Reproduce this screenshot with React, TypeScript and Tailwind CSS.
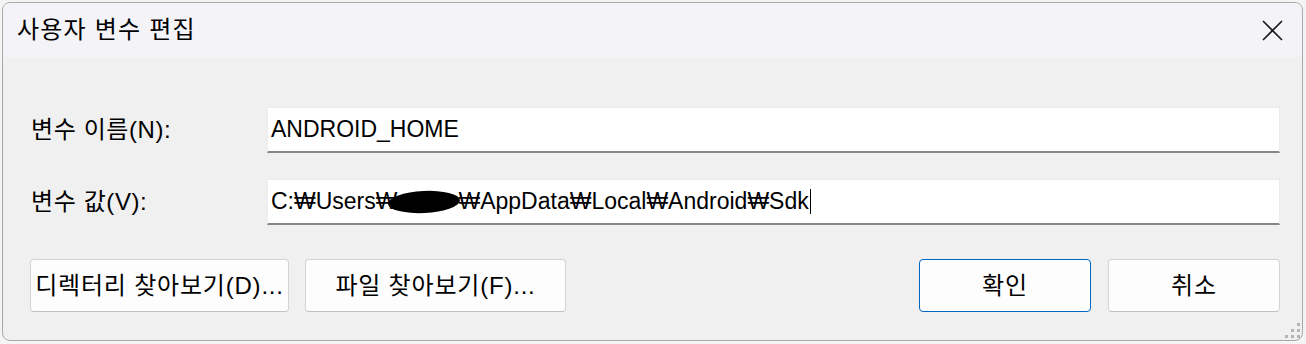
export default function App() {
  const font = { fontFamily: '"Liberation Sans", "Noto Sans CJK KR", sans-serif' };

  return (
    <div className="w-[1306px] h-[344px] bg-[#f4f4f4] pt-[2px] pl-[2px] overflow-hidden" style={font}>
      {/* WINDOW */}
      <div className="relative w-[1301px] h-[339px] border border-[#a9a9a9] rounded-[8px] overflow-hidden flex flex-col bg-[#f0f0f0] text-black">
        {/* TITLE BAR */}
        <div className="h-[54px] bg-[#f3f3f8] flex items-center justify-between pl-[14px] pr-[19px]">
          <span className="text-[24px] tracking-[1.2px]">사용자 변수 편집</span>
          <svg width="21" height="21" viewBox="0 0 21 21" className="text-[#1a1a1a]">
            <path d="M1 1 L20 20 M20 1 L1 20" stroke="currentColor" strokeWidth="1.6" fill="none" />
          </svg>
        </div>

        {/* BODY */}
        <div className="flex-1 pt-[50px]">
          <div className="grid grid-cols-[236px_1013px] gap-y-[26px] pl-[28px] items-center">
            <span className="text-[24px] tracking-[0.6px]">변수 이름(N):</span>
            <div className="h-[46px] bg-white border border-[#ececec] border-b-2 border-b-[#878787] flex items-center pl-[3px] text-[23px]">
              ANDROID_HOME
            </div>

            <span className="text-[24px] tracking-[0.6px]">변수 값(V):</span>
            <div className="h-[46px] bg-white border border-[#ececec] border-b-2 border-b-[#878787] flex items-center pl-[3px] text-[23px] whitespace-nowrap">
              <span>C:₩Users₩</span>
              <span className="inline-block w-[72px] h-[22px] bg-black rounded-[50%] -rotate-3 -ml-[9px] -mr-[2px]" />
              <span>₩AppData₩Local₩Android₩Sdk</span>
              <span className="inline-block w-[1px] h-[25px] bg-black ml-[1px]" />
            </div>
          </div>

          {/* BUTTONS */}
          <div className="flex items-center pl-[27px] pr-[22px] mt-[34px]">
            <button className="w-[259px] h-[53px] bg-[#fdfdfd] border border-[#d3d3d3] border-b-[#c2c2c2] rounded-[4px] text-[24px] tracking-[0.8px]">
              디렉터리 찾아보기(D)...
            </button>
            <button className="w-[261px] h-[53px] ml-[16px] bg-[#fdfdfd] border border-[#d3d3d3] border-b-[#c2c2c2] rounded-[4px] text-[24px] tracking-[0.8px]">
              파일 찾아보기(F)...
            </button>
            <div className="flex-1" />
            <button className="w-[172px] h-[53px] bg-[#fdfdfd] border border-[#0067c0] rounded-[4px] text-[24px] tracking-[1px]">
              확인
            </button>
            <button className="w-[172px] h-[53px] ml-[17px] bg-[#fdfdfd] border border-[#d3d3d3] border-b-[#c2c2c2] rounded-[4px] text-[24px] tracking-[1px]">
              취소
            </button>
          </div>
        </div>

        {/* RESIZE GRIP */}
        <div className="absolute right-[2px] bottom-[2px] grid grid-cols-3 gap-[3px]">
          <span className="w-[3px] h-[3px]" />
          <span className="w-[3px] h-[3px]" />
          <span className="w-[3px] h-[3px] bg-[#b5b5b5]" />
          <span className="w-[3px] h-[3px]" />
          <span className="w-[3px] h-[3px] bg-[#b5b5b5]" />
          <span className="w-[3px] h-[3px] bg-[#b5b5b5]" />
          <span className="w-[3px] h-[3px] bg-[#b5b5b5]" />
          <span className="w-[3px] h-[3px] bg-[#b5b5b5]" />
          <span className="w-[3px] h-[3px] bg-[#b5b5b5]" />
        </div>
      </div>
    </div>
  );
}
